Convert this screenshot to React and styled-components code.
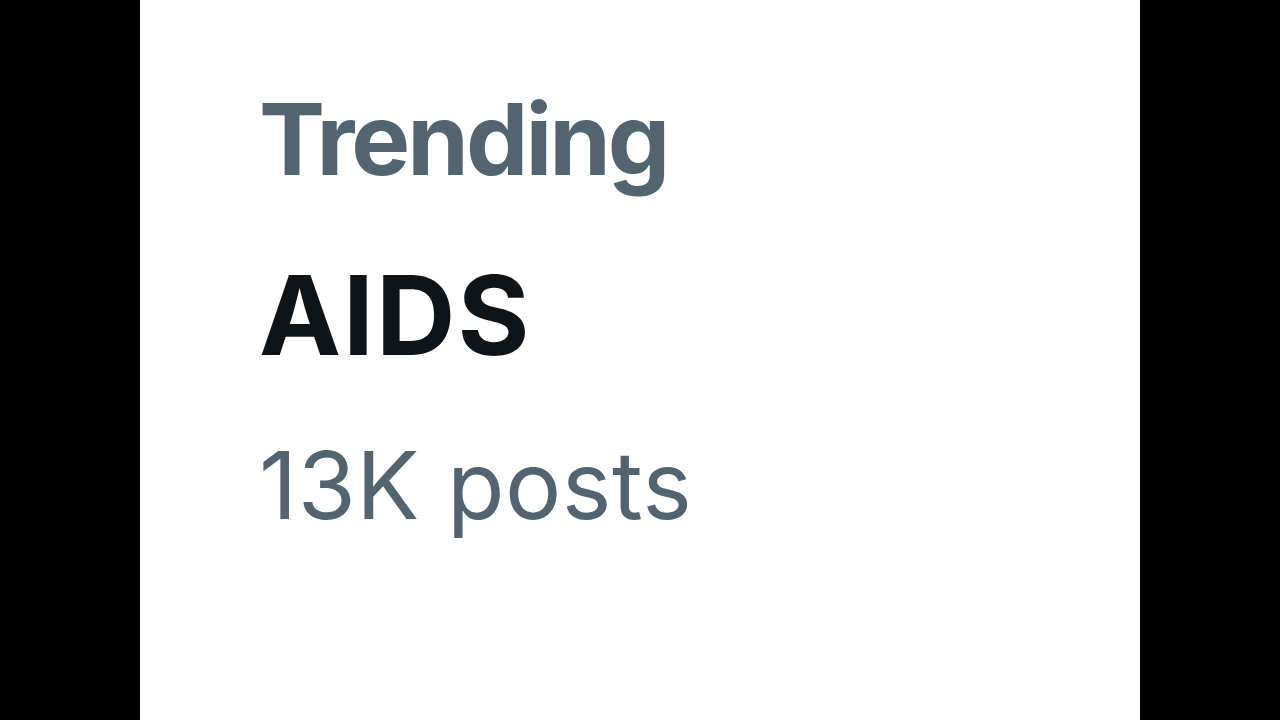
import React from "react";
import styled, { createGlobalStyle } from "styled-components";

const GlobalStyle = createGlobalStyle`
  html, body {
    margin: 0;
    padding: 0;
    background: #000;
  }
`;

const Page = styled.div`
  width: 1280px;
  height: 720px;
  display: flex;
  justify-content: center;
  background: #000;
`;

const Card = styled.div`
  width: 1000px;
  height: 720px;
  background: #fff;
  box-sizing: border-box;
  padding: 80px 0 0 119px;
  display: flex;
  flex-direction: column;
  font-family: Inter, "Liberation Sans", sans-serif;
`;

const Label = styled.div`
  font-size: 99px;
  line-height: 1.2;
  font-weight: 700;
  color: #536471;
  letter-spacing: -3px;
`;

const Topic = styled.div`
  margin-top: 50px;
  font-size: 110px;
  line-height: 1.2;
  font-weight: 700;
  color: #0f1419;
  letter-spacing: 2px;
`;

const Count = styled.div`
  margin-top: 48px;
  font-size: 94px;
  line-height: 1.2;
  font-weight: 400;
  color: #536471;
  letter-spacing: 0.5px;
`;

export default function App() {
  return (
    <>
      <GlobalStyle />
      <Page>
        <Card>
          <Label>Trending</Label>
          <Topic>AIDS</Topic>
          <Count>13K posts</Count>
        </Card>
      </Page>
    </>
  );
}
